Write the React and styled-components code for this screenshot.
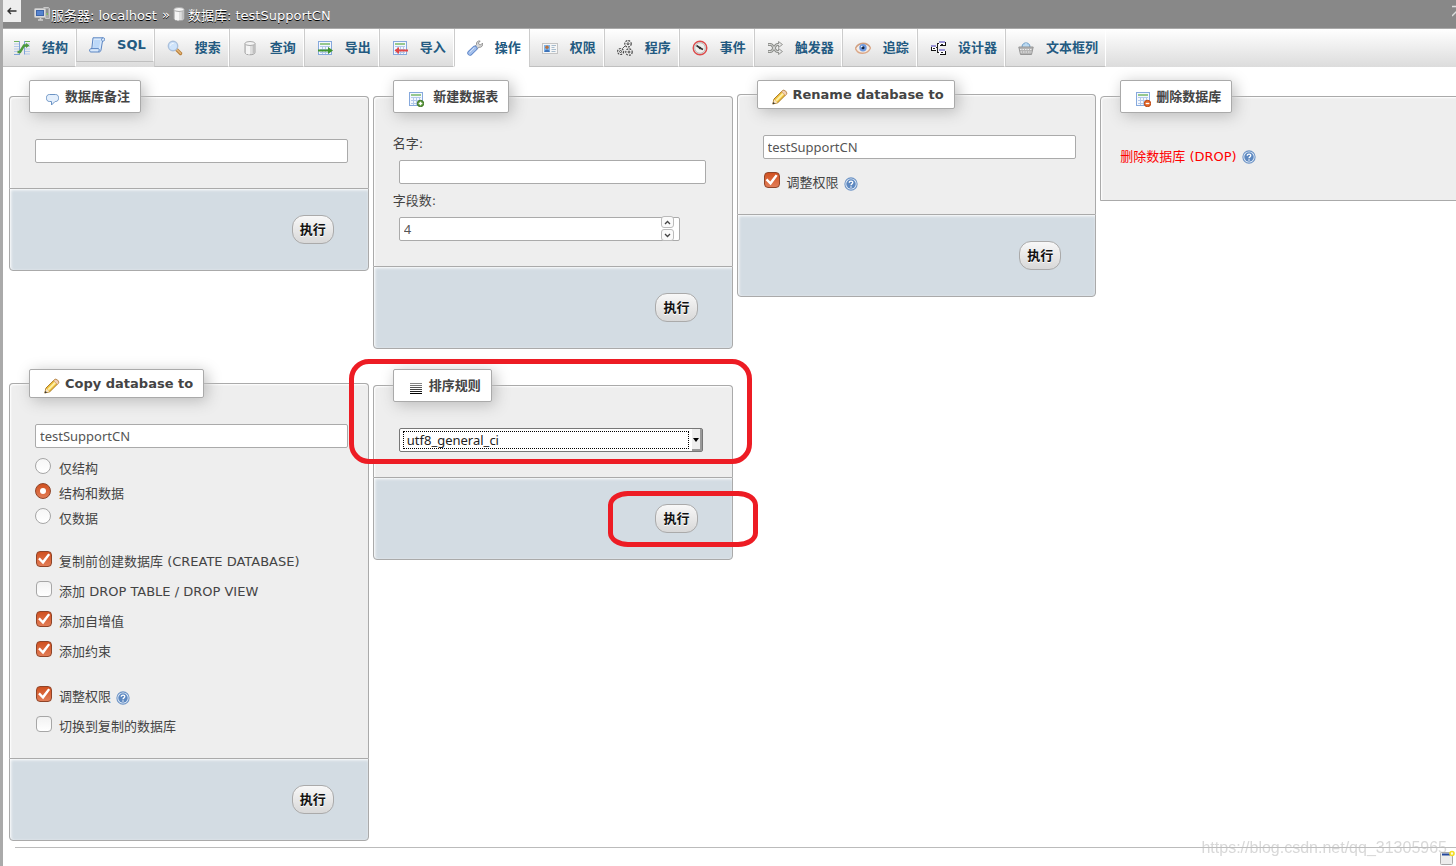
import React from "react";
import styled, { createGlobalStyle, css } from "styled-components";

const GlobalStyle = createGlobalStyle`
    * {
        box-sizing: border-box;
    }
    body {
        margin: 0;
        background: #fff;
        color: #444;
        font-family: "DejaVu Sans", "Noto Sans CJK SC", sans-serif;
        font-size: 13px;
        overflow-x: hidden;
    }
`;

/* ---------- icons ---------- */

const Icon = ({ children, size = 16 }) => (
    <svg width={size} height={size} viewBox="0 0 16 16" aria-hidden="true">
        {children}
    </svg>
);

const TableBase = () => (
    <>
        <rect x="1.5" y="1.5" width="13" height="13" fill="#f4f8fe" stroke="#86a9dd" />
        <path d="M3 4h10" stroke="#6db35c" strokeWidth="1.4" />
        <path d="M3 6.5h10M3 9.5h10M3 12.5h10M5.5 6v8M8.5 6v8M11.5 6v8" stroke="#b3c9ea" />
    </>
);

const ServerIcon = () => (
    <Icon>
        <path d="M9.5 1.5h5l1 1v10h-4v-2" fill="#a9a9a9" stroke="#c8c8c8" />
        <path d="M11 4h3M11 6h3" stroke="#777" />
        <rect x="0.5" y="2.5" width="11" height="9" rx="1" fill="#dadada" stroke="#bfbfbf" />
        <rect x="2.5" y="4.5" width="7" height="5" fill="#5583cf" stroke="#3d64a8" />
        <path d="M4 14h5M6.5 12v2" stroke="#cfcfcf" strokeWidth="1.6" />
        <path d="M12.5 8h1.5" stroke="#72c04a" strokeWidth="1.6" />
    </Icon>
);

const DatabaseIcon = () => (
    <Icon>
        <path d="M3 3.5v9c0 3 10 3 10 0v-9z" fill="#dedede" stroke="#a3a3a3" />
        <path d="M5 5v9M7 5.5v9" stroke="#fafafa" strokeWidth="1.6" />
        <path d="M11.5 5v8.500" stroke="#c0c0c0" strokeWidth="1.6" />
        <ellipse cx="8" cy="3.500" rx="5" ry="2" fill="#f4f4f4" stroke="#ababab" />
    </Icon>
);

const StructureIcon = () => (
    <Icon>
        <path d="M0 1.500h5M11 1.500h5" stroke="#6db35c" />
        <path d="M0 4h5M0 6.500h5M0 9h5M0 11.500h5M11 4h5M11 6.500h5M11 9h5M11 11.500h5M11 14h5" stroke="#b3c9ea" />
        <path d="M5.500 1v13.500M10.500 1v13.500M0 14.500h6" stroke="#7fa3d8" />
        <path d="M3.500 12h2.500l4-6.500h3" fill="none" stroke="#4b9a3c" strokeWidth="2.400" />
        <path d="M12 3l3.500 2.500L12 8z" fill="#4b9a3c" />
    </Icon>
);

const ScriptIcon = () => (
    <Icon>
        <path d="M4 .8h10.500c1.500 0 1.500 3.200 0 3.200h-1l-1.500 9c-.4 1.500-1 2-2 2H1.800c-1.800 0-1.500-3.400.3-3.400h.7z" fill="#d9e9fb" stroke="#5b85c2" />
        <path d="M5.200 3h6.300l-1.500 8.500H3.800z" fill="#bcd8f8" />
        <path d="M13.300 4c-1.300-.5-1-2.700.5-3.200M2 11.600h7.500c1 0 .8 2.800 0 3.400" fill="none" stroke="#5b85c2" />
    </Icon>
);

const SearchIcon = () => (
    <Icon>
        <path d="M9.500 9.500l4 4" stroke="#b9803c" strokeWidth="3.400" strokeLinecap="round" />
        <path d="M10 9.800l3.500 3.500" stroke="#e6b779" strokeWidth="1.400" strokeLinecap="round" />
        <circle cx="6" cy="6" r="4.700" fill="#cfe4fb" stroke="#aac0dc" strokeWidth="1.400" />
        <path d="M3.500 5.500c.4-1.500 1.500-2.200 3-2" fill="none" stroke="#fff" />
    </Icon>
);

const ExportIcon = () => (
    <Icon>
        <TableBase />
        <path d="M1 10.500h11" stroke="#3f9430" strokeWidth="2" />
        <path d="M11 7l5 3.500-5 3.500z" fill="#3f9430" />
    </Icon>
);

const ImportIcon = () => (
    <Icon>
        <TableBase />
        <path d="M5 10.500h11" stroke="#e04545" strokeWidth="2" />
        <path d="M7 7l-4.500 3.500L7 14z" fill="#e04545" />
    </Icon>
);

const WrenchIcon = () => (
    <Icon>
        <path d="M7.500 7L9.500 4.500C9 2 11 .5 13.200 1l-1.800 2 .9 1.600 1.500.2L15.600 3c.6 2.700-1.200 4.700-3.600 4.300L9.500 9.500z" fill="#d8d8d8" stroke="#8c8c8c" strokeWidth=".9" />
        <path d="M3 13l4.800-4.600" stroke="#5f86c8" strokeWidth="5.400" strokeLinecap="round" />
        <path d="M3 13l4.800-4.600" stroke="#a4c0ec" strokeWidth="3.700" strokeLinecap="round" />
        <path d="M3 12l4-4" stroke="#d4e3f9" strokeLinecap="round" />
    </Icon>
);

const PrivilegesIcon = () => (
    <Icon>
        <rect x=".5" y="3.500" width="15" height="10" fill="#f6f6f6" stroke="#c4c4c4" />
        <rect x="2" y="5" width="6" height="7" fill="#7db4ea" />
        <circle cx="5" cy="7.200" r="1.700" fill="#b9703d" />
        <path d="M2.500 12c0-3.500 5-3.500 5 0z" fill="#3f72b5" />
        <path d="M9.500 5.500h4.500M9.500 7.500h3M9.500 9.500h4.500M9.500 11.500h4" stroke="#a8bccd" />
    </Icon>
);

const GearsIcon = () => (
    <Icon>
        <g fill="#f4f4f4" stroke="#444" strokeWidth="1.200" strokeDasharray="2 1">
            <circle cx="11" cy="3.800" r="3.200" />
            <circle cx="3.600" cy="11.500" r="3" />
            <circle cx="12" cy="12" r="3.200" />
        </g>
        <g fill="#fff" stroke="#444">
            <circle cx="11" cy="3.800" r="1" />
            <circle cx="3.600" cy="11.500" r="1" />
            <circle cx="12" cy="12" r="1" />
        </g>
        <path d="M5.500 8.500l2.500-2.500" stroke="#555" />
    </Icon>
);

const ClockIcon = () => (
    <Icon>
        <circle cx="8" cy="8" r="6.800" fill="#eef0ee" stroke="#dd4b4b" strokeWidth="1.400" />
        <circle cx="8" cy="8" r="5.300" fill="none" stroke="#b9b9b9" />
        <path d="M4.500 5.500L8 8l3 1.500" fill="none" stroke="#333" strokeWidth="1.600" />
        <circle cx="8" cy="8" r="1.200" fill="#333" />
    </Icon>
);

const TriggerIcon = () => (
    <Icon>
        <g fill="none" stroke="#8e908c" strokeWidth="3">
            <path d="M1 4.500h2.500c3 0 4 7 7 7H12" />
            <path d="M1 11.500h2.500c3 0 4-7 7-7H12" />
        </g>
        <path d="M11.500 1.500l4 3-4 3zM11.500 8.500l4 3-4 3z" fill="#e4e4e4" stroke="#8e908c" strokeWidth=".9" />
        <g fill="none" stroke="#e4e4e4" strokeWidth="1">
            <path d="M1.500 4.500h2c3 0 4 7 7 7H13" />
            <path d="M1.500 11.500h2c3 0 4-7 7-7H13" />
        </g>
    </Icon>
);

const EyeIcon = () => (
    <Icon>
        <path d="M.5 8.500C3 1.800 12.500 1.500 15.500 8c-3 7-12.500 7-15 .5z" fill="#f5ece6" stroke="#dba888" strokeWidth="1.400" />
        <path d="M1 7.500C4 2.600 12 2.500 15 7" fill="none" stroke="#c49a80" />
        <circle cx="8" cy="7.800" r="3.700" fill="#6f9be0" />
        <circle cx="8" cy="7.800" r="1.500" fill="#15233f" />
        <circle cx="6.800" cy="6.600" r=".8" fill="#fff" />
    </Icon>
);

const DesignerIcon = () => (
    <Icon>
        <g shapeRendering="crispEdges">
            <path d="M5.500 7.500h2v-4h2M7.500 7.500v5h2" fill="none" stroke="#222" />
            <path d="M1 6h5v4H1zM9 2h6v4H9zM9 10h6v5H9z" fill="#fff" />
            <path d="M1.500 6v4.500H6M9.500 5.500H15V2M9.500 14.500H15V11" fill="none" stroke="#111" />
            <path d="M1 5h5v2H1zM9 1h6v2H9zM9 9h6v2H9z" fill="#9a94d6" />
            <path d="M3 8.500h2M11 4.500h2M11 12.500h2" stroke="#222" />
        </g>
    </Icon>
);

const BasketIcon = () => (
    <Icon>
        <path d="M4 7c0-5.500 8-5.500 8 0" fill="#9cc7ea" stroke="#6c9cc6" />
        <path d="M8 3v4M6 4.500v3M10 4.500v3" stroke="#dceefb" />
        <path d="M.8 7h14.400l-1.700 7.500h-11z" fill="#b4b4b4" stroke="#969696" />
        <path d="M2 9.500h12M2.500 12h11" stroke="#ececec" strokeDasharray="1.500 1" />
    </Icon>
);

const CommentIcon = () => (
    <Icon>
        <path d="M5.500 3.500h6c1.800 0 3 1.200 3 3v1c0 1.800-1.200 3-3 3h-.5l-3.500 3.500v-3.500h-2c-1.800 0-3-1.200-3-3v-1c0-1.800 1.200-3 3-3z" fill="#e4effc" stroke="#6b93c4" />
    </Icon>
);

const AddTableIcon = () => (
    <Icon>
        <TableBase />
        <circle cx="12.500" cy="12.500" r="3.200" fill="#5c9a3b" stroke="#3d7424" />
        <path d="M12.500 10.700v3.600M10.700 12.500h3.600" stroke="#fff" strokeWidth="1.300" />
    </Icon>
);

const DropIcon = () => (
    <Icon>
        <TableBase />
        <circle cx="12.500" cy="12.500" r="3.200" fill="#e5682a" stroke="#bb4510" />
        <path d="M10.700 12.500h3.600" stroke="#fff" strokeWidth="1.300" />
    </Icon>
);

const PencilIcon = () => (
    <Icon>
        <path d="M.8 15l1.200-5 8.600-8.400c1.600-1.400 5.200 1.800 3.800 3.600L5.800 13.700z" fill="#f2c23e" stroke="#a87a28" />
        <path d="M4.200 11.600l7.300-7.400" stroke="#fdf0a8" strokeWidth="2" />
        <path d="M9.600 2.800l3.800 3.700 1-1.200c1.100-1.800-2.200-4.800-3.800-3.600z" fill="#f3d0b4" stroke="#c08a62" strokeWidth=".6" />
        <path d="M2.300 10.500l3.200 3-4.500 1.300z" fill="#f7e3c2" />
        <path d="M.7 15.300l.6-2.400 1.800 1.700z" fill="#333" />
    </Icon>
);

const LinesIcon = () => (
    <Icon>
        <g shapeRendering="crispEdges">
            <path d="M2 3.500h12" stroke="#888" />
            <path d="M2 5.500h12" stroke="#777" />
            <path d="M2 7.500h12" stroke="#555" />
            <path d="M2 9.500h12" stroke="#444" />
            <path d="M2 11.500h12" stroke="#222" />
            <path d="M2 13.500h12" stroke="#000" />
        </g>
    </Icon>
);

const HelpIcon = () => (
    <Icon>
        <circle cx="8" cy="8" r="7" fill="#e3edf8" stroke="#6d94c6" strokeWidth="1.200" />
        <circle cx="8" cy="8" r="5.400" fill="#5d88c0" />
        <path d="M6 6.600c0-2.600 4.200-2.400 4 0-.1 1.300-2 1.300-2 2.800" fill="none" stroke="#fff" strokeWidth="1.500" />
        <circle cx="8" cy="11.500" r=".9" fill="#fff" />
    </Icon>
);

const ConsoleIcon = () => (
    <Icon>
        <rect x="1.500" y="2.500" width="12" height="12" rx="1" fill="#ececec" stroke="#aaa" />
        <path d="M3 4.500h8" stroke="#24489c" strokeWidth="2" />
        <circle cx="13" cy="3.500" r="2" fill="#fffbe0" stroke="#f3dd22" strokeWidth="1.600" />
    </Icon>
);

/* ---------- page parts ---------- */

const Page = styled.div`
    min-height: 100vh;
    border-left: 3px solid #aaa;
    overflow: hidden;
`;

const ServerBar = styled.header`
    display: flex;
    align-items: flex-start;
    height: 28px;
    background: #888;
`;

const CollapseButton = styled.button`
    width: 18px;
    height: 22px;
    padding: 0;
    border: 0;
    background: #eee;
    display: flex;
    align-items: center;
    justify-content: center;
`;

const Breadcrumb = styled.div`
    flex: 1;
    display: flex;
    align-items: center;
    height: 28px;
    padding-left: 13px;
    gap: 1px;
    color: #fff;
    text-shadow: 0 1px 0 #000;
    white-space: pre;

    a {
        color: inherit;
        text-decoration: none;
    }
`;

const PageSettings = styled.button`
    width: 12px;
    height: 20px;
    margin-right: -8px;
    padding: 0;
    border: 0;
    background: none;
`;

const TabBar = styled.nav`
    display: flex;
    align-items: flex-start;
    height: 39px;
    border-top: 1px solid #aaa;
    background: linear-gradient(#fff, #dcdcdc);
`;

const Tab = styled.a`
    display: flex;
    align-items: center;
    gap: 12px;
    height: ${(props) => (props.$short ? "33px" : "38px")};
    padding: 0 7px 0 12px;
    border-left: 1px solid #ccc;
    border-right: 1px solid #fff;
    border-bottom: 1px solid #c0c0c0;
    color: #235a81;
    font-weight: bold;
    line-height: 20px;
    text-decoration: none;
    white-space: nowrap;

    &:first-child {
        padding-left: 11px;
        border-left: 0;
    }

    ${(props) =>
        props.$active &&
        css`
            background: #fff;
            border-bottom-color: #fff;
        `}
`;

const Operations = styled.main`
    display: grid;
    grid-template-columns: repeat(4, minmax(0, 1fr));
    align-items: start;
    gap: 20px 4px;
    margin-right: -4px;
    padding: 13px 0 6px 6px;
`;

const Form = styled.form`
    position: relative;
    grid-column-start: ${(props) => (props.$first ? 1 : "auto")};
`;

const Fields = styled.fieldset`
    min-width: 0;
    margin: 0;
    padding: 20px 19px 19px;
    border: 1px solid #aaa;
    border-bottom-width: ${(props) => (props.$closed ? "1px" : "0")};
    border-radius: 4px 4px 0 0;
    background: #eee;
    box-shadow: inset 1px 1px 2px #fff;
`;

const Legend = styled.legend`
    display: flex;
    align-items: center;
    gap: 5px;
    padding: 5px 10px 5px 14px;
    border: 1px solid #aaa;
    border-radius: 2px;
    background: #fff;
    box-shadow: 3px 3px 15px #bbb;
    font-weight: bold;
    line-height: ${(props) => (props.$latin ? "17px" : "21px")};
    white-space: pre;

    svg {
        margin: 2px 0 -2px;
    }
`;

const Footer = styled.div`
    display: flex;
    justify-content: flex-end;
    padding: 26px 34px;
    border: 1px solid #aaa;
    border-radius: 0 0 4px 4px;
    background: #d3dce3;
    box-shadow: inset 1px 1px 3px #fff;
`;

const GoButton = styled.button`
    height: 29px;
    padding: 0 7px;
    border: 1px solid #aaa;
    border-radius: 12px;
    background: linear-gradient(#f8f8f8, #d8d8d8);
    color: #111;
    font: bold 13px/20px "DejaVu Sans", "Noto Sans CJK SC", sans-serif;
    text-shadow: 0 1px 0 #fff;
`;

const fieldFont = css`
    color: #555;
    font: 13px/18px "Noto Sans", "Noto Sans CJK SC", sans-serif;
`;

const TextBox = styled.input`
    display: block;
    width: ${(props) => props.$width || "98%"};
    height: 24px;
    margin: 6px 0 6px 6px;
    padding: 0 4px;
    border: 1px solid #aaa;
    border-radius: 2px;
    background: #fff;
    ${fieldFont}
`;

const FieldLabel = styled.label`
    display: block;
    line-height: 21px;
`;

const NumberBox = styled.div`
    position: relative;
    width: 88%;
    margin: 6px 0 6px 6px;

    input {
        width: 100%;
        margin: 0;
        appearance: textfield;
    }
    input::-webkit-inner-spin-button {
        display: none;
    }
`;

const Spinner = styled.div`
    position: absolute;
    top: -1px;
    right: 6px;
    display: grid;
    gap: 1px;
`;

const SpinButton = styled.button`
    width: 13px;
    height: 12px;
    padding: 0;
    border: 1px solid #bbb;
    border-radius: 3px;
    background: #fafafa;
    display: flex;
    align-items: center;
    justify-content: center;
`;

const Choice = styled.div`
    display: flex;
    height: ${(props) => (props.$radio ? "25px" : "30px")};
    padding-left: ${(props) => (props.$radio ? "6px" : "7px")};
    padding-top: ${(props) => (props.$radio ? "4px" : "7px")};
    gap: ${(props) => (props.$radio ? "8px" : "7px")};

    label {
        line-height: 21px;
        white-space: nowrap;
    }
    a {
        height: 14px;
        margin: 5px 0 0 -2px;
    }
    a svg {
        display: block;
    }
`;

const ChoiceGroup = styled.div`
    margin-top: ${(props) => (props.$gap ? "15px" : "0")};
`;

const CheckBox = styled.input`
    appearance: none;
    width: 16px;
    height: 16px;
    margin: 0;
    border: 1px solid #a6a6a6;
    border-radius: 4px;
    background: linear-gradient(#f2f2f2, #fff);

    &:checked {
        border-color: #8f4428;
        background: linear-gradient(#d0501f, #e27d57);
    }
    &:checked::before {
        content: "";
        display: block;
        width: 14px;
        height: 14px;
        background: #fff;
        clip-path: polygon(8% 52%, 20% 40%, 41% 60%, 80% 10%, 94% 20%, 44% 88%);
    }
`;

const Radio = styled.input`
    appearance: none;
    display: grid;
    place-items: center;
    width: 16px;
    height: 16px;
    margin: 0;
    border: 1px solid #a6a6a6;
    border-radius: 50%;
    background: linear-gradient(#f6f6f6, #fff);

    &:checked {
        border-color: #8f4428;
        background: linear-gradient(#d0501f, #e27d57);
    }
    &:checked::before {
        content: "";
        width: 6px;
        height: 6px;
        border-radius: 50%;
        background: #fff;
    }
`;

const SelectBox = styled.div`
    position: relative;
    width: 95%;
    height: 24px;
    margin: 6px 0 6px 6px;

    select {
        appearance: none;
        width: 100%;
        height: 24px;
        padding: 0 20px 0 7px;
        border: 1px solid #777;
        border-radius: 2px;
        background: #fff;
        ${fieldFont}
        color: #222;
    }
    /* focus outline of the current option */
    &::before {
        content: "";
        position: absolute;
        inset: 3px 14px 3px 4px;
        border: 1px dotted #000;
        pointer-events: none;
    }
`;

const SelectArrow = styled.span`
    position: absolute;
    top: 1px;
    right: 1px;
    width: 10px;
    height: 22px;
    border: solid #999;
    border-width: 0 2px 2px 0;
    background: #eee;
    pointer-events: none;

    svg {
        position: absolute;
        top: 9px;
        left: 1px;
    }
`;

const DropRow = styled.div`
    display: flex;
    align-items: center;
    gap: 5px;
    padding: 14px 0;
    line-height: 20px;

    a {
        color: #f00;
        text-decoration: none;
    }
    svg {
        display: block;
    }
`;

const Mark = styled.div`
    position: absolute;
    border: 5px solid #ed1c24;
    pointer-events: none;
    z-index: 1;
`;

const FieldMark = styled(Mark)`
    top: -10px;
    right: -19px;
    left: -24px;
    height: 105px;
    border-radius: 20px;
`;

const ButtonMark = styled(Mark)`
    top: 122px;
    right: -25px;
    width: 150px;
    height: 56px;
    border-radius: 20px / 14px;
`;

const Divider = styled.hr`
    height: 1px;
    margin: 0 0 0 12px;
    border: 0;
    background: #bbb;
`;

const Watermark = styled.div`
    position: fixed;
    right: 9px;
    bottom: 8px;
    color: rgba(190, 190, 190, 0.6);
    font: 16px/20px "Liberation Sans", sans-serif;
`;

const ConsoleButton = styled.button`
    position: fixed;
    right: 1px;
    bottom: 0;
    width: 16px;
    height: 17px;
    padding: 0;
    border: 0;
    background: none;

    svg {
        display: block;
    }
`;

/* ---------- data ---------- */

const tabs = [
    { name: "结构", icon: <StructureIcon /> },
    { name: "SQL", icon: <ScriptIcon />, short: true },
    { name: "搜索", icon: <SearchIcon /> },
    { name: "查询", icon: <DatabaseIcon /> },
    { name: "导出", icon: <ExportIcon /> },
    { name: "导入", icon: <ImportIcon /> },
    { name: "操作", icon: <WrenchIcon />, active: true },
    { name: "权限", icon: <PrivilegesIcon /> },
    { name: "程序", icon: <GearsIcon /> },
    { name: "事件", icon: <ClockIcon /> },
    { name: "触发器", icon: <TriggerIcon /> },
    { name: "追踪", icon: <EyeIcon /> },
    { name: "设计器", icon: <DesignerIcon /> },
    { name: "文本框列", icon: <BasketIcon /> },
];

const whatOptions = [
    { id: "structure", name: "仅结构" },
    { id: "both", name: "结构和数据", checked: true },
    { id: "data", name: "仅数据" },
];

const copyOptions = [
    { id: "create", name: "复制前创建数据库 (CREATE DATABASE)", checked: true },
    { id: "drop", name: "添加 DROP TABLE / DROP VIEW" },
    { id: "increment", name: "添加自增值", checked: true },
    { id: "constraints", name: "添加约束", checked: true },
];

function HelpLink() {
    return (
        <a href="#help" aria-label="文档">
            <Icon size={14}>
                <HelpIcon />
            </Icon>
        </a>
    );
}

function CheckRow({ id, name, checked, help }) {
    return (
        <Choice>
            <CheckBox type="checkbox" id={id} defaultChecked={checked} />
            <label htmlFor={id}>{name}</label>
            {help && <HelpLink />}
        </Choice>
    );
}

function Go() {
    return (
        <Footer>
            <GoButton type="button">执行</GoButton>
        </Footer>
    );
}

export default function App() {
    return (
        <Page>
            <GlobalStyle />
            <ServerBar>
                <CollapseButton aria-label="隐藏面板">
                    <svg width="10" height="8" viewBox="0 0 10 8">
                        <path d="M9.500 4H1.500M4 1L1 4l3 3" fill="none" stroke="#333" strokeWidth="1.400" />
                    </svg>
                </CollapseButton>
                <Breadcrumb>
                    <ServerIcon />
                    <a href="#server">服务器: localhost</a>
                    <span> »</span>
                    <DatabaseIcon />
                    <a href="#db">数据库: testSupportCN</a>
                </Breadcrumb>
                <PageSettings aria-label="页面设置">
                    <svg width="12" height="20" viewBox="0 0 12 20">
                        <path d="M0 6.500h10M0 16l9-9" fill="none" stroke="#ddd" strokeWidth="1.400" />
                    </svg>
                </PageSettings>
            </ServerBar>
            <TabBar>
                {tabs.map((tab) => (
                    <Tab key={tab.name} href="#tab" $short={tab.short} $active={tab.active}>
                        {tab.icon}
                        {tab.name}
                    </Tab>
                ))}
            </TabBar>

            <Operations>
                <Form>
                    <Fields>
                        <Legend>
                            <CommentIcon />
                            数据库备注
                        </Legend>
                        <TextBox type="text" aria-label="数据库备注" />
                    </Fields>
                    <Go />
                </Form>

                <Form>
                    <Fields>
                        <Legend>
                            <AddTableIcon />
                            <span>&nbsp;新建数据表</span>
                        </Legend>
                        <FieldLabel htmlFor="table">名字:</FieldLabel>
                        <TextBox type="text" id="table" $width="96%" />
                        <FieldLabel htmlFor="fields">字段数:</FieldLabel>
                        <NumberBox>
                            <TextBox type="number" id="fields" defaultValue="4" />
                            <Spinner>
                                <SpinButton type="button" aria-label="增加">
                                    <svg width="7" height="5" viewBox="0 0 7 5">
                                        <path d="M1 4l2.500-2.500L6 4" fill="none" stroke="#444" strokeWidth="1.300" />
                                    </svg>
                                </SpinButton>
                                <SpinButton type="button" aria-label="减少">
                                    <svg width="7" height="5" viewBox="0 0 7 5">
                                        <path d="M1 1l2.500 2.500L6 1" fill="none" stroke="#444" strokeWidth="1.300" />
                                    </svg>
                                </SpinButton>
                            </Spinner>
                        </NumberBox>
                    </Fields>
                    <Go />
                </Form>

                <Form>
                    <Fields>
                        <Legend $latin>
                            <PencilIcon />
                            Rename database to
                        </Legend>
                        <TextBox type="text" aria-label="Rename database to" defaultValue="testSupportCN" />
                        <CheckRow id="rename-adjust" name="调整权限" checked help />
                    </Fields>
                    <Go />
                </Form>

                <Form>
                    <Fields $closed>
                        <Legend>
                            <DropIcon />
                            删除数据库
                        </Legend>
                        <DropRow>
                            <a href="#drop">删除数据库 (DROP)</a>
                            <HelpLink />
                        </DropRow>
                    </Fields>
                </Form>

                <Form $first>
                    <Fields>
                        <Legend $latin>
                            <PencilIcon />
                            Copy database to
                        </Legend>
                        <TextBox type="text" aria-label="Copy database to" defaultValue="testSupportCN" />
                        {whatOptions.map((option) => (
                            <Choice key={option.id} $radio>
                                <Radio type="radio" name="what" id={option.id} defaultChecked={option.checked} />
                                <label htmlFor={option.id}>{option.name}</label>
                            </Choice>
                        ))}
                        <ChoiceGroup $gap>
                            {copyOptions.map((option) => (
                                <CheckRow key={option.id} {...option} />
                            ))}
                        </ChoiceGroup>
                        <ChoiceGroup $gap>
                            <CheckRow id="copy-adjust" name="调整权限" checked help />
                            <CheckRow id="switch" name="切换到复制的数据库" />
                        </ChoiceGroup>
                    </Fields>
                    <Go />
                </Form>

                <Form>
                    <Fields>
                        <Legend>
                            <LinesIcon />
                            排序规则
                        </Legend>
                        <SelectBox>
                            <select aria-label="排序规则" defaultValue="utf8_general_ci">
                                <option>utf8_general_ci</option>
                            </select>
                            <SelectArrow>
                                <svg width="6" height="4" viewBox="0 0 6 4">
                                    <path d="M0 0h6L3 4z" fill="#000" />
                                </svg>
                            </SelectArrow>
                        </SelectBox>
                    </Fields>
                    <Go />
                    <FieldMark />
                    <ButtonMark />
                </Form>
            </Operations>

            <Divider />
            <Watermark>https://blog.csdn.net/qq_31305965</Watermark>
            <ConsoleButton aria-label="控制台">
                <ConsoleIcon />
            </ConsoleButton>
        </Page>
    );
}
